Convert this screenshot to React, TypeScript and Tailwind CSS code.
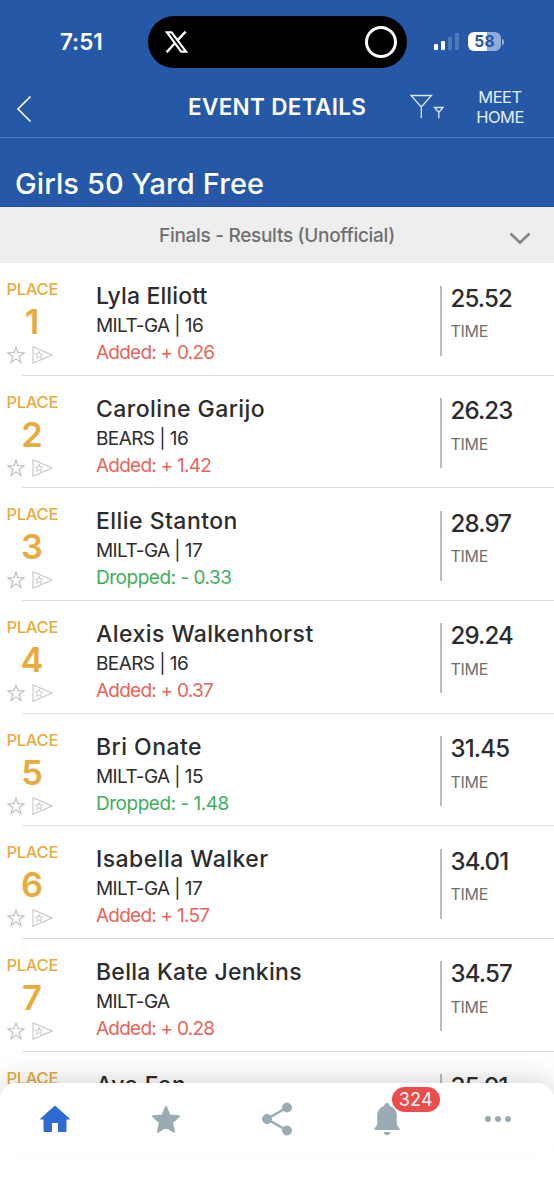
import React from 'react';
import clsx from 'clsx';

type Result = {
  place: number;
  name: string;
  nameTracking?: string;
  team: string;
  diff: string;
  dropped?: boolean;
  time: string;
};

const results: Result[] = [
  { place: 1, name: 'Lyla Elliott', nameTracking: 'tracking-[0.13px]', team: 'MILT-GA | 16', diff: 'Added: + 0.26', time: '25.52' },
  { place: 2, name: 'Caroline Garijo', team: 'BEARS | 16', diff: 'Added: + 1.42', time: '26.23' },
  { place: 3, name: 'Ellie Stanton', team: 'MILT-GA | 17', diff: 'Dropped: - 0.33', dropped: true, time: '28.97' },
  { place: 4, name: 'Alexis Walkenhorst', team: 'BEARS | 16', diff: 'Added: + 0.37', time: '29.24' },
  { place: 5, name: 'Bri Onate', team: 'MILT-GA | 15', diff: 'Dropped: - 1.48', dropped: true, time: '31.45' },
  { place: 6, name: 'Isabella Walker', team: 'MILT-GA | 17', diff: 'Added: + 1.57', time: '34.01' },
  { place: 7, name: 'Bella Kate Jenkins', nameTracking: 'tracking-[0.27px]', team: 'MILT-GA', diff: 'Added: + 0.28', time: '34.57' },
  { place: 8, name: 'Ava Fan', team: 'MILT-GA | 15', diff: 'Added: + 0.41', time: '35.91' },
];

const StatusBar = () => (
  <div className="flex h-[68px] items-start pt-4">
    <div className="w-[148px] pl-[60px] pt-[10px] text-[22.5px] font-semibold leading-8 tracking-[-0.1px]">7:51</div>
    <div className="flex h-[52px] w-[259px] items-center justify-between rounded-full bg-black pl-[17px] pr-[10px]">
      <svg width="23" height="22" viewBox="0 0 23 22" fill="none" stroke="white">
        <path d="M2 1.4h4.6l14.4 19.2h-4.8z" strokeWidth="2.1" />
        <path d="M20.6.6l-8.4 9M9.8 12.2L1.6 21.4" strokeWidth="2.4" />
      </svg>
      <div className="size-8 rounded-full border-[3px] border-white" />
    </div>
    <div className="flex items-center pl-[27px] pt-4">
      <div className="flex h-[17px] items-end gap-[3px]">
        <i className="h-[6px] w-[4px] rounded-[1px] bg-white" />
        <i className="h-[9px] w-[4px] rounded-[1px] bg-white" />
        <i className="h-[13px] w-[4px] rounded-[1px] bg-white/20" />
        <i className="h-[17px] w-[4px] rounded-[1px] bg-white/20" />
      </div>
      <div className="ml-[9px] flex h-[19px] w-[33px] items-center justify-center rounded-[6px] bg-linear-to-r from-white from-58% to-[#8fadd9] to-58% text-[15.5px] font-bold tracking-[0.2px] text-[#2558a6]">
        58
      </div>
      <i className="ml-[1px] h-[6px] w-[2px] rounded-r-full bg-white/50" />
    </div>
  </div>
);

const Header = () => (
  <header className="h-[207px] border-b border-[#1f4f9c] bg-[#2558a6] text-white">
    <StatusBar />
    <div className="flex h-[70px] items-start border-b border-[#4f7bc0]">
      <div className="w-[188px] pl-4 pt-[27px]">
        <svg width="16" height="28" viewBox="0 0 16 28" fill="none" stroke="currentColor" strokeWidth="1.6">
          <path d="M14.5 1.5L2 14l12.5 12.5" />
        </svg>
      </div>
      <h1 className="w-[222px] whitespace-nowrap pt-[23px] text-[22.5px] font-semibold leading-8 tracking-[0.33px]">
        EVENT DETAILS
      </h1>
      <svg className="mt-[26px]" width="35" height="26" viewBox="0 0 35 26" fill="none" stroke="#dcebff" strokeWidth="1.3">
        <path d="M1 1.5h20.5L11.3 13zM11.3 13v11" />
        <path d="M24.5 13.5H33l-4.2 5zM28.8 18.5v6" />
      </svg>
      <div className="ml-[21px] w-[68px] pt-[20px] text-center text-[16.5px] leading-[19.5px] tracking-[-0.5px] text-[#e3efff]">
        MEET
        <br />
        HOME
      </div>
    </div>
    <h2 className="whitespace-nowrap pl-[15px] pt-[26px] text-[29px] font-medium leading-10 tracking-[0.1px]">
      Girls 50 Yard Free
    </h2>
  </header>
);

const RowIcons = () => (
  <div className="flex h-5 items-center gap-[7px] pl-[7px]">
    <svg width="18" height="18" viewBox="0 0 18 18" fill="none" stroke="#bdbdbd" strokeWidth="1.1">
      <path d="M9 1l2 5.8h6l-4.9 3.7 1.9 6L9 12.9l-5 3.6 1.9-6L1 6.8h6z" />
    </svg>
    <svg width="21" height="18" viewBox="0 0 21 18" fill="none" stroke="#c6c6c6" strokeWidth="1.1">
      <path d="M1 .8v16.4L20 9z" />
      <path d="M7 5.2l.9 2.7h2.9L8.5 9.6l.9 2.9L7 10.8l-2.4 1.7.9-2.9-2.3-1.7h2.9z" strokeWidth=".9" />
    </svg>
  </div>
);

const ResultRow = ({ result }: { result: Result }) => (
  <li className="flex h-[112.67px] shrink-0 flex-col">
    <div className="flex min-h-0 flex-1 items-start whitespace-nowrap">
      <div className="w-24 pt-[16px] text-[#e8ab3e]">
        <div className="pl-[6.5px] text-[16.5px] font-medium leading-5 tracking-[-0.3px]">PLACE</div>
        <div className="mt-[5px] w-16 text-center text-[34.5px] font-semibold leading-9">{result.place}</div>
        <div className="pt-[5px]">
          <RowIcons />
        </div>
      </div>
      <div className="w-[344px] pt-[19px]">
        <div className={clsx('text-[23px] font-medium leading-7 text-[#2c2c2e]', result.nameTracking ?? 'tracking-[0.46px]')}>
          {result.name}
        </div>
        <div className="mt-[2px] text-[19px] leading-7 tracking-[-0.58px] text-[#2c2c2e]">{result.team}</div>
        <div
          className={clsx(
            '-mt-[1px] text-[19px] leading-7',
            result.dropped ? 'tracking-[-0.48px] text-[#3fae5d]' : 'tracking-[-0.76px] text-[#e8645a]'
          )}
        >
          {result.diff}
        </div>
      </div>
      <div className="mt-[22.5px] h-[70px] border-l-2 border-[#bcbcbc] pl-[8.5px]">
        <div className="-mt-[1px] text-[24px] font-medium leading-7 tracking-[-0.85px] text-[#2c2c2e]">{result.time}</div>
        <div className="mt-[6.5px] text-[16px] leading-6 tracking-[-0.3px] text-[#6f6f6f]">TIME</div>
      </div>
    </div>
    <div className="ml-[22px] h-px bg-[#dcdcdc]" />
  </li>
);

const TabBar = () => (
  <nav className="absolute inset-x-0 bottom-0 h-[117px] rounded-t-2xl bg-white shadow-[0_-4px_28px_rgba(0,0,0,0.16)]">
    <div className="grid h-[72px] grid-cols-5 items-center justify-items-center rounded-2xl text-[#9aabb3] shadow-[0_1px_4px_rgba(0,0,0,0.02)]">
      <svg width="32" height="28" viewBox="0 0 32 28" fill="#2d6bd2" stroke="#2d6bd2" strokeLinejoin="round">
        <path d="M16 1l14.5 13H27v12.500h-7.500v-9h-7v9H5V14H1.500z" />
      </svg>
      <svg width="30" height="28" viewBox="0 0 30 28" fill="currentColor" stroke="currentColor" strokeWidth="2" strokeLinejoin="round">
        <path d="M15 2l3.6 8.5 9.4.8-7.1 6.2 2.2 9.2-8.1-4.900-8.100 4.900 2.200-9.200L2 11.300l9.400-.8z" />
      </svg>
      <svg width="32" height="34" viewBox="0 0 32 34" fill="currentColor" stroke="currentColor">
        <path d="M26 5.500L6 17l20 11.500" fill="none" strokeWidth="2.5" />
        <circle cx="26" cy="5.5" r="4.5" />
        <circle cx="6" cy="17" r="4.5" />
        <circle cx="26" cy="28.5" r="4.5" />
      </svg>
      <div className="relative -left-px">
        <svg className="block" width="26" height="33" viewBox="0 0 26 33" fill="currentColor">
          <path d="M13 0c1.700 0 2.700 1.200 2.700 2.900C20 4 22.800 7.600 22.800 12.500V22l2.500 3c.8 1.200.3 2-.8 2h-23C.4 27-.1 26.200.7 25l2.500-3v-9.500C3.200 7.600 6 4 10.300 2.900 10.300 1.200 11.300 0 13 0z" />
          <path d="M9.700 29h6.600c-.3 2-1.500 3.200-3.300 3.200S10 31 9.700 29z" />
        </svg>
        <span className="absolute -top-[16px] left-[18px] flex h-[25px] w-12 items-center justify-center rounded-full bg-[#ec4d4a] text-[18px] tracking-[0.2px] text-white">
          324
        </span>
      </div>
      <div className="flex gap-[4px] pr-px">
        <i className="size-[6px] rounded-full bg-current" />
        <i className="size-[6px] rounded-full bg-current" />
        <i className="size-[6px] rounded-full bg-current" />
      </div>
    </div>
  </nav>
);

export default function App() {
  return (
    <div className="relative flex h-[1200px] w-[554px] flex-col overflow-hidden bg-white font-['Inter',sans-serif]">
      <Header />
      <div className="flex h-14 shrink-0 items-center bg-[#eeeeee] text-[19px] font-medium tracking-[-0.3px] text-[#707070]">
        <span className="w-[159px]" />
        <span className="w-[237px] whitespace-nowrap pt-[2px]">Finals - Results (Unofficial)</span>
        <span className="flex flex-1 justify-end pr-[23px] pt-[7px]">
          <svg width="22" height="13" viewBox="0 0 22 13" fill="none" stroke="#858585" strokeWidth="2.6">
            <path d="M1.5 1.5L11 10.8l9.5-9.3" />
          </svg>
        </span>
      </div>
      <ul>
        {results.map((result) => (
          <ResultRow key={result.place} result={result} />
        ))}
      </ul>
      <TabBar />
    </div>
  );
}
